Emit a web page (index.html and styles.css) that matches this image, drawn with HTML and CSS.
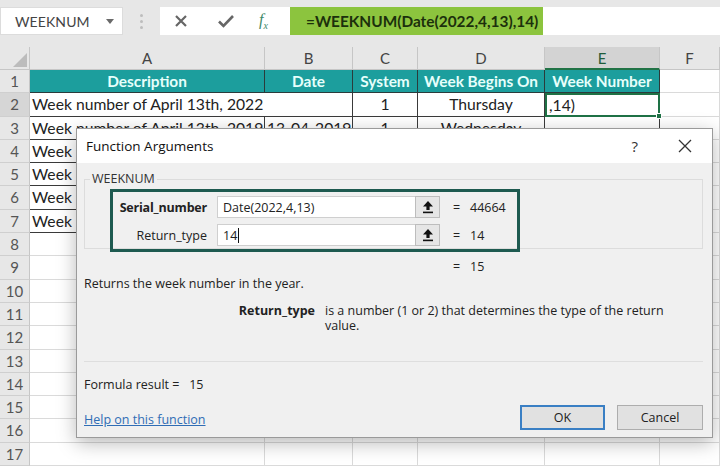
FILE: index.html
```html
<!DOCTYPE html>
<html>
<head>
<meta charset="utf-8">
<link rel="stylesheet" href="styles.css">
</head>
<body>
<div class="app">
  <div class="toolbar">
    <div class="namebox">
      <span class="nb-text">WEEKNUM</span>
      <svg class="nb-dd" width="8" height="5" viewBox="0 0 8 5"><path d="M0 0H8L4 5Z" fill="#6a6a6a"/></svg>
    </div>
    <div class="grip"><i></i><i></i><i></i></div>
    <div class="fbtns">
      <svg class="fb-x" width="14" height="14" viewBox="0 0 14 14"><path d="M2 2L12 12M12 2L2 12" stroke="#666" stroke-width="2.2" fill="none"/></svg>
      <svg class="fb-ok" width="18" height="14" viewBox="0 0 18 14"><path d="M2 7.5L6.5 12L16 2" stroke="#666" stroke-width="2.6" fill="none"/></svg>
      <span class="fx"><i>f</i><sub>x</sub></span>
    </div>
    <div class="formula">=WEEKNUM(Date(2022,4,13),14)</div>
    <div class="fill"></div>
  </div>

  <div class="sheet">
    <div class="corner"><svg width="14" height="14" viewBox="0 0 14 14"><path d="M14 0V14H0Z" fill="#bcbcbc"/></svg></div>
    <div class="ch">A</div><div class="ch">B</div><div class="ch">C</div><div class="ch">D</div><div class="ch sel">E</div><div class="ch">F</div>

    <div class="rh">1</div>
    <div class="c hd">Description</div><div class="c hd">Date</div><div class="c hd">System</div><div class="c hd">Week Begins On</div><div class="c hd">Week Number</div><div class="g"></div>

    <div class="rh rsel">2</div>
    <div class="c t nr">Week number of April 13th, 2022</div><div class="c t"></div><div class="c t ctr">1</div><div class="c t ctr">Thursday</div><div class="c t active">,14)<span class="handle"></span></div><div class="g"></div>

    <div class="rh">3</div>
    <div class="c t">Week number of April 13th, 2019</div><div class="c t">13-04-2019</div><div class="c t ctr">1</div><div class="c t ctr">Wednesday</div><div class="c t"></div><div class="g"></div>

    <div class="rh">4</div>
    <div class="c t">Week</div><div class="c t"></div><div class="c t"></div><div class="c t"></div><div class="c t"></div><div class="g"></div>

    <div class="rh">5</div>
    <div class="c t">Week</div><div class="c t"></div><div class="c t"></div><div class="c t"></div><div class="c t"></div><div class="g"></div>

    <div class="rh">6</div>
    <div class="c t">Week</div><div class="c t"></div><div class="c t"></div><div class="c t"></div><div class="c t"></div><div class="g"></div>

    <div class="rh">7</div>
    <div class="c t">Week</div><div class="c t"></div><div class="c t"></div><div class="c t"></div><div class="c t"></div><div class="g"></div>

    <div class="rh">8</div><div class="g"></div><div class="g"></div><div class="g"></div><div class="g"></div><div class="g"></div><div class="g"></div>
    <div class="rh">9</div><div class="g"></div><div class="g"></div><div class="g"></div><div class="g"></div><div class="g"></div><div class="g"></div>
    <div class="rh">10</div><div class="g"></div><div class="g"></div><div class="g"></div><div class="g"></div><div class="g"></div><div class="g"></div>
    <div class="rh">11</div><div class="g"></div><div class="g"></div><div class="g"></div><div class="g"></div><div class="g"></div><div class="g"></div>
    <div class="rh">12</div><div class="g"></div><div class="g"></div><div class="g"></div><div class="g"></div><div class="g"></div><div class="g"></div>
    <div class="rh">13</div><div class="g"></div><div class="g"></div><div class="g"></div><div class="g"></div><div class="g"></div><div class="g"></div>
    <div class="rh">14</div><div class="g"></div><div class="g"></div><div class="g"></div><div class="g"></div><div class="g"></div><div class="g"></div>
    <div class="rh">15</div><div class="g"></div><div class="g"></div><div class="g"></div><div class="g"></div><div class="g"></div><div class="g"></div>
    <div class="rh">16</div><div class="g"></div><div class="g"></div><div class="g"></div><div class="g"></div><div class="g"></div><div class="g"></div>
    <div class="rh">17</div><div class="g"></div><div class="g"></div><div class="g"></div><div class="g"></div><div class="g"></div><div class="g"></div>
  </div>

  <div class="dialog">
    <div class="titlebar">
      <span class="title">Function Arguments</span>
      <span class="help">?</span>
      <svg class="close" width="14" height="14" viewBox="0 0 14 14"><path d="M1 1L13 13M13 1L1 13" stroke="#333" stroke-width="1.3" fill="none"/></svg>
    </div>
    <div class="dbody">
      <fieldset class="group">
        <legend>WEEKNUM</legend>
        <div class="args">
          <div class="arg">
            <span class="alabel b">Serial_number</span>
            <span class="ainput">Date(2022,4,13)</span>
            <span class="refbtn"><svg width="12" height="14" viewBox="0 0 12 14"><path d="M6 1L11 6.5H7.6V10H4.4V6.5H1Z" fill="#111"/><rect x="1" y="11.6" width="10" height="1.6" fill="#111"/></svg></span>
            <span class="eq">=</span><span class="aval">44664</span>
          </div>
          <div class="arg">
            <span class="alabel">Return_type</span>
            <span class="ainput">14<span class="caret"></span></span>
            <span class="refbtn"><svg width="12" height="14" viewBox="0 0 12 14"><path d="M6 1L11 6.5H7.6V10H4.4V6.5H1Z" fill="#111"/><rect x="1" y="11.6" width="10" height="1.6" fill="#111"/></svg></span>
            <span class="eq">=</span><span class="aval">14</span>
          </div>
        </div>
      </fieldset>
      <div class="result-row"><span class="eq">=</span><span class="aval">15</span></div>
      <p class="summary">Returns the week number in the year.</p>
      <div class="argdesc">
        <span class="dlabel">Return_type</span>
        <span class="dtext"><span class="dline">is a number (1 or 2) that determines the type of the return</span><span class="dline">value.</span></span>
      </div>
      <div class="sep"></div>
      <p class="fresult">Formula result =&nbsp;&nbsp;&nbsp;15</p>
      <div class="footer">
        <a class="link">Help on this function</a>
        <div class="btns">
          <span class="btn ok">OK</span>
          <span class="btn">Cancel</span>
        </div>
      </div>
    </div>
  </div>
</div>
</body>
</html>
```

FILE: styles.css
```css
* { box-sizing: border-box; }
html, body { margin: 0; padding: 0; }
body { width: 720px; height: 466px; overflow: hidden; background: #fff; font-family: Lato, "Liberation Sans", sans-serif; }
.app { position: relative; width: 720px; height: 466px; overflow: hidden; background: #e7e7e7; }

/* toolbar */
.toolbar { height: 47px; display: flex; align-items: flex-start; padding-top: 7px; }
.namebox { width: 123px; height: 28px; background: #fff; display: flex; align-items: center; padding-left: 14px; border: 1px solid #dcdcdc; }
.nb-text { font-size: 14px; color: #444; letter-spacing: 0.1px; flex: 1; }
.nb-dd { margin-right: 8px; }
.grip { width: 37px; height: 28px; display: flex; flex-direction: column; align-items: center; justify-content: center; gap: 3px; }
.grip i { width: 3px; height: 3px; border-radius: 50%; background: #bdbdbd; display: block; }
.fbtns { width: 130px; height: 28px; background: #fff; display: flex; align-items: center; padding-left: 14px; }
.fb-x { margin-right: 29px; }
.fb-ok { margin-right: 24px; }
.fx { font-family: "Liberation Serif", serif; color: #3f8a6a; font-size: 16px; }
.fx sub { font-size: 10px; font-style: italic; }
.formula { width: 253px; height: 28px; background: #8cc43e; color: #1c300c; font-weight: 700; font-size: 15.4px; line-height: 28px; padding-left: 16px; white-space: nowrap; overflow: hidden; }
.fill { flex: 1; height: 28px; background: #fff; }

/* sheet */
.sheet { display: grid; grid-template-columns: 30px 235px 88px 65px 127px 115px 60px; grid-template-rows: 23px repeat(17, 23.3px); background: #fff; }
.corner { background: #e7e7e7; border-right: 1px solid #c6c6c6; border-bottom: 1px solid #c6c6c6; display: flex; align-items: flex-end; justify-content: flex-end; padding: 0 2px 2px 0; }
.ch { background: #e7e7e7; border-right: 1px solid #c6c6c6; border-bottom: 1px solid #c6c6c6; text-align: center; font-size: 15px; line-height: 22px; color: #444; }
.ch.sel { background: #d3d3d3; border-bottom: 2px solid #217346; color: #1f5c3a; }
.rh { background: #e7e7e7; border-right: 1px solid #c6c6c6; border-bottom: 1px solid #cfcfcf; text-align: center; font-size: 15px; line-height: 23px; color: #555; }
.rh.rsel { background: #d6d6d6; }
.c { font-size: 15.7px; line-height: 23px; color: #222; padding-left: 2px; white-space: nowrap; overflow: hidden; }
.hd { background: #1c9e9d; color: #e6fffb; font-weight: 700; text-align: center; border-right: 1px solid #2b3b3b; border-bottom: 1px solid #2b3b3b; padding-left: 0; font-size: 15.4px; line-height: 22px; }
.t { border-right: 1px solid #3a3a3a; border-bottom: 1px solid #3a3a3a; }
.t.nr { border-right: none; overflow: visible; }
.ctr { text-align: center; padding-left: 0; }
.active { position: relative; border: 2px solid #1e7145; overflow: visible; line-height: 20px; }
.handle { position: absolute; right: -4px; bottom: -4px; width: 6px; height: 6px; background: #1e7145; border: 1px solid #fff; }
.g { border-right: 1px solid #dadada; border-bottom: 1px solid #dadada; }

/* dialog */
.dialog { position: absolute; left: 76px; top: 128px; width: 637px; height: 310px; background: #f0f0f0; border: 1px solid #9a9a9a; box-shadow: 0 5px 18px rgba(0,0,0,0.28); font-family: "Open Sans", "Noto Sans", sans-serif; font-size: 12.5px; color: #222; }
.titlebar { height: 34px; background: #fff; display: flex; align-items: center; padding-left: 9px; }
.title { font-size: 13.5px; flex: 1; color: #111; }
.help { font-size: 15px; color: #333; margin-right: 40px; }
.close { margin-right: 20px; }
.dbody { padding: 0 9px 0 7px; }
.group { margin: 8px 0 0; border: 1px solid #dcdcdc; padding: 0 0 0 25px; min-width: 0; }
.group legend { margin-left: -20px; padding: 0 2px; font-size: 12.5px; line-height: 16px; color: #333; }
.args { width: 410px; border: 3px solid #1e5a50; padding: 4px 0 3px 0; margin-top: 2px; margin-bottom: -4px; display: flex; flex-direction: column; gap: 6px; }
.arg { display: flex; align-items: center; height: 22px; }
.alabel { width: 94px; text-align: right; margin-right: 10px; font-size: 12.5px; white-space: nowrap; }
.alabel.b { font-weight: 700; letter-spacing: -0.2px; }
.ainput { width: 198px; height: 22px; background: #fff; border: 1px solid #cfcfcf; border-right: none; padding-left: 5px; font-size: 12.5px; display: flex; align-items: center; }
.caret { display: inline-block; width: 1px; height: 15px; background: #111; margin-left: 1px; }
.refbtn { width: 25px; height: 22px; background: #e6e6e6; border: 1px solid #bdbdbd; display: flex; align-items: center; justify-content: center; }
.eq { margin-left: 13px; width: 17px; }
.result-row { display: flex; padding-left: 369px; margin-top: 10px; line-height: 15px; }
.result-row .eq { margin-left: 0; }
.summary { margin: 2px 0 0; line-height: 15px; }
.argdesc { display: flex; margin-top: 12px; line-height: 15px; }
.dlabel { width: 231px; text-align: right; font-weight: 700; margin-right: 10px; flex: none; }
.dtext { flex: 1; display: flex; flex-direction: column; }
.dline { display: block; white-space: nowrap; line-height: 15px; }
.sep { height: 1px; background: #dedede; margin-top: 28px; }
.fresult { margin: 15px 0 0; line-height: 15px; }
.footer { display: flex; align-items: center; margin-top: 13px; height: 25px; }
.link { color: #2f6db5; text-decoration: underline; flex: 1; padding-top: 3px; }
.btns { display: flex; gap: 12px; }
.btn { width: 86px; height: 25px; background: #e1e1e1; border: 1px solid #adadad; display: flex; align-items: center; justify-content: center; }
.btn.ok { width: 85px; border: 2px solid #3a7fc4; }
```
